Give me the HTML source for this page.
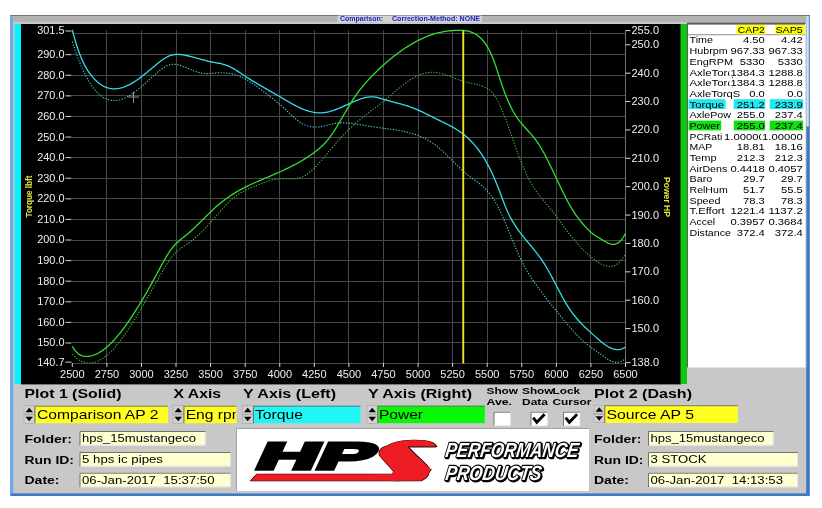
<!DOCTYPE html>
<html><head><meta charset="utf-8"><title>Comparison</title>
<style>
html,body{margin:0;padding:0;background:#fff;}
body{width:822px;height:508px;overflow:hidden;font-family:"Liberation Sans", Arial, sans-serif;}
svg{display:block;will-change:transform;}
text{white-space:pre;}
</style></head><body>
<svg width="822" height="508" viewBox="0 0 822 508" font-family='"Liberation Sans", Arial, sans-serif'>
<rect x="0" y="0" width="822" height="508" fill="#fff"/>
<rect x="10.3" y="15" width="799.5" height="481" fill="#4079c2"/>
<rect x="10.3" y="15" width="3" height="478.5" fill="#6cacec"/>
<rect x="13.2" y="15" width="793" height="478.4" fill="#c8c8c8"/>
<rect x="806.2" y="15" width="2.6" height="111.4" fill="#d4e0f2"/>
<rect x="13.2" y="15" width="793" height="9" fill="#b2b2b2"/>
<rect x="10.3" y="15" width="799.5" height="0.9" fill="#6e6e6e"/>
<rect x="13.2" y="22.3" width="674" height="1.4" fill="#d2d2d2"/>
<rect x="337.5" y="15.6" width="144.5" height="6.4" fill="#d4d4d4"/>
<text x="340" y="20.8" font-size="7" font-weight="bold" fill="#2020c8" text-anchor="start" textLength="43" lengthAdjust="spacingAndGlyphs" >Comparison:</text>
<text x="392" y="20.8" font-size="7" font-weight="bold" fill="#2020c8" text-anchor="start" textLength="88" lengthAdjust="spacingAndGlyphs" >Correction-Method: NONE</text>
<rect x="14.7" y="23.8" width="6.3" height="360.2" fill="#00f4fc"/>
<rect x="21" y="24" width="660" height="360.4" fill="#000"/>
<rect x="680.5" y="24" width="6.5" height="360" fill="#10c810"/>
<path d="M106.5 30.5V363.5 M141.5 30.5V363.5 M176.5 30.5V363.5 M210.5 30.5V363.5 M245.5 30.5V363.5 M279.5 30.5V363.5 M314.5 30.5V363.5 M348.5 30.5V363.5 M383.5 30.5V363.5 M418.5 30.5V363.5 M452.5 30.5V363.5 M487.5 30.5V363.5 M521.5 30.5V363.5 M556.5 30.5V363.5 M590.5 30.5V363.5 M72 33.5H625.5 M72 54.5H625.5 M72 75.5H625.5 M72 95.5H625.5 M72 116.5H625.5 M72 137.5H625.5 M72 157.5H625.5 M72 178.5H625.5 M72 198.5H625.5 M72 219.5H625.5 M72 240.5H625.5 M72 260.5H625.5 M72 281.5H625.5 M72 301.5H625.5 M72 322.5H625.5 M72 342.5H625.5 M72 363.5H625.5" stroke="#484848" stroke-width="1" fill="none"/>
<path d="M625.5 30.5V363.5" stroke="#707070" stroke-width="1" fill="none"/>
<path d="M65.5 31.00H71.5 M65.5 54.68H71.5 M65.5 75.27H71.5 M65.5 95.87H71.5 M65.5 116.46H71.5 M65.5 137.05H71.5 M65.5 157.65H71.5 M65.5 178.24H71.5 M65.5 198.83H71.5 M65.5 219.43H71.5 M65.5 240.02H71.5 M65.5 260.61H71.5 M65.5 281.20H71.5 M65.5 301.80H71.5 M65.5 322.39H71.5 M65.5 342.98H71.5 M65.5 362.14H71.5 M625.5 30.60H630.5 M625.5 44.79H630.5 M625.5 73.17H630.5 M625.5 101.55H630.5 M625.5 129.93H630.5 M625.5 158.31H630.5 M625.5 186.69H630.5 M625.5 215.07H630.5 M625.5 243.45H630.5 M625.5 271.83H630.5 M625.5 300.21H630.5 M625.5 328.59H630.5 M625.5 362.65H630.5 M72.30 363V367 M106.88 363V367 M141.45 363V367 M176.03 363V367 M210.60 363V367 M245.18 363V367 M279.75 363V367 M314.32 363V367 M348.90 363V367 M383.48 363V367 M418.05 363V367 M452.63 363V367 M487.20 363V367 M521.77 363V367 M556.35 363V367 M590.92 363V367 M625.50 363V367" stroke="#d8d8d8" stroke-width="1" fill="none"/>
<g font-family='"Liberation Sans", Arial, sans-serif' >
<text x="64.5" y="34.4" font-size="10" font-weight="normal" fill="#eeeeee" text-anchor="end" textLength="27.3" lengthAdjust="spacingAndGlyphs" >301.5</text>
<text x="64.5" y="58.1" font-size="10" font-weight="normal" fill="#eeeeee" text-anchor="end" textLength="27.3" lengthAdjust="spacingAndGlyphs" >290.0</text>
<text x="64.5" y="78.7" font-size="10" font-weight="normal" fill="#eeeeee" text-anchor="end" textLength="27.3" lengthAdjust="spacingAndGlyphs" >280.0</text>
<text x="64.5" y="99.3" font-size="10" font-weight="normal" fill="#eeeeee" text-anchor="end" textLength="27.3" lengthAdjust="spacingAndGlyphs" >270.0</text>
<text x="64.5" y="119.9" font-size="10" font-weight="normal" fill="#eeeeee" text-anchor="end" textLength="27.3" lengthAdjust="spacingAndGlyphs" >260.0</text>
<text x="64.5" y="140.5" font-size="10" font-weight="normal" fill="#eeeeee" text-anchor="end" textLength="27.3" lengthAdjust="spacingAndGlyphs" >250.0</text>
<text x="64.5" y="161.0" font-size="10" font-weight="normal" fill="#eeeeee" text-anchor="end" textLength="27.3" lengthAdjust="spacingAndGlyphs" >240.0</text>
<text x="64.5" y="181.6" font-size="10" font-weight="normal" fill="#eeeeee" text-anchor="end" textLength="27.3" lengthAdjust="spacingAndGlyphs" >230.0</text>
<text x="64.5" y="202.2" font-size="10" font-weight="normal" fill="#eeeeee" text-anchor="end" textLength="27.3" lengthAdjust="spacingAndGlyphs" >220.0</text>
<text x="64.5" y="222.8" font-size="10" font-weight="normal" fill="#eeeeee" text-anchor="end" textLength="27.3" lengthAdjust="spacingAndGlyphs" >210.0</text>
<text x="64.5" y="243.4" font-size="10" font-weight="normal" fill="#eeeeee" text-anchor="end" textLength="27.3" lengthAdjust="spacingAndGlyphs" >200.0</text>
<text x="64.5" y="264.0" font-size="10" font-weight="normal" fill="#eeeeee" text-anchor="end" textLength="27.3" lengthAdjust="spacingAndGlyphs" >190.0</text>
<text x="64.5" y="284.6" font-size="10" font-weight="normal" fill="#eeeeee" text-anchor="end" textLength="27.3" lengthAdjust="spacingAndGlyphs" >180.0</text>
<text x="64.5" y="305.2" font-size="10" font-weight="normal" fill="#eeeeee" text-anchor="end" textLength="27.3" lengthAdjust="spacingAndGlyphs" >170.0</text>
<text x="64.5" y="325.8" font-size="10" font-weight="normal" fill="#eeeeee" text-anchor="end" textLength="27.3" lengthAdjust="spacingAndGlyphs" >160.0</text>
<text x="64.5" y="346.4" font-size="10" font-weight="normal" fill="#eeeeee" text-anchor="end" textLength="27.3" lengthAdjust="spacingAndGlyphs" >150.0</text>
<text x="64.5" y="365.5" font-size="10" font-weight="normal" fill="#eeeeee" text-anchor="end" textLength="27.3" lengthAdjust="spacingAndGlyphs" >140.7</text>
<text x="631.5" y="34.0" font-size="10" font-weight="normal" fill="#eeeeee" text-anchor="start" textLength="27.5" lengthAdjust="spacingAndGlyphs" >255.0</text>
<text x="631.5" y="48.2" font-size="10" font-weight="normal" fill="#eeeeee" text-anchor="start" textLength="27.5" lengthAdjust="spacingAndGlyphs" >250.0</text>
<text x="631.5" y="76.6" font-size="10" font-weight="normal" fill="#eeeeee" text-anchor="start" textLength="27.5" lengthAdjust="spacingAndGlyphs" >240.0</text>
<text x="631.5" y="105.0" font-size="10" font-weight="normal" fill="#eeeeee" text-anchor="start" textLength="27.5" lengthAdjust="spacingAndGlyphs" >230.0</text>
<text x="631.5" y="133.3" font-size="10" font-weight="normal" fill="#eeeeee" text-anchor="start" textLength="27.5" lengthAdjust="spacingAndGlyphs" >220.0</text>
<text x="631.5" y="161.7" font-size="10" font-weight="normal" fill="#eeeeee" text-anchor="start" textLength="27.5" lengthAdjust="spacingAndGlyphs" >210.0</text>
<text x="631.5" y="190.1" font-size="10" font-weight="normal" fill="#eeeeee" text-anchor="start" textLength="27.5" lengthAdjust="spacingAndGlyphs" >200.0</text>
<text x="631.5" y="218.5" font-size="10" font-weight="normal" fill="#eeeeee" text-anchor="start" textLength="27.5" lengthAdjust="spacingAndGlyphs" >190.0</text>
<text x="631.5" y="246.8" font-size="10" font-weight="normal" fill="#eeeeee" text-anchor="start" textLength="27.5" lengthAdjust="spacingAndGlyphs" >180.0</text>
<text x="631.5" y="275.2" font-size="10" font-weight="normal" fill="#eeeeee" text-anchor="start" textLength="27.5" lengthAdjust="spacingAndGlyphs" >170.0</text>
<text x="631.5" y="303.6" font-size="10" font-weight="normal" fill="#eeeeee" text-anchor="start" textLength="27.5" lengthAdjust="spacingAndGlyphs" >160.0</text>
<text x="631.5" y="332.0" font-size="10" font-weight="normal" fill="#eeeeee" text-anchor="start" textLength="27.5" lengthAdjust="spacingAndGlyphs" >150.0</text>
<text x="631.5" y="366.0" font-size="10" font-weight="normal" fill="#eeeeee" text-anchor="start" textLength="27.5" lengthAdjust="spacingAndGlyphs" >138.0</text>
<text x="72.3" y="377.8" font-size="10" font-weight="normal" fill="#eeeeee" text-anchor="middle" textLength="24.5" lengthAdjust="spacingAndGlyphs" >2500</text>
<text x="106.9" y="377.8" font-size="10" font-weight="normal" fill="#eeeeee" text-anchor="middle" textLength="24.5" lengthAdjust="spacingAndGlyphs" >2750</text>
<text x="141.4" y="377.8" font-size="10" font-weight="normal" fill="#eeeeee" text-anchor="middle" textLength="24.5" lengthAdjust="spacingAndGlyphs" >3000</text>
<text x="176.0" y="377.8" font-size="10" font-weight="normal" fill="#eeeeee" text-anchor="middle" textLength="24.5" lengthAdjust="spacingAndGlyphs" >3250</text>
<text x="210.6" y="377.8" font-size="10" font-weight="normal" fill="#eeeeee" text-anchor="middle" textLength="24.5" lengthAdjust="spacingAndGlyphs" >3500</text>
<text x="245.2" y="377.8" font-size="10" font-weight="normal" fill="#eeeeee" text-anchor="middle" textLength="24.5" lengthAdjust="spacingAndGlyphs" >3750</text>
<text x="279.8" y="377.8" font-size="10" font-weight="normal" fill="#eeeeee" text-anchor="middle" textLength="24.5" lengthAdjust="spacingAndGlyphs" >4000</text>
<text x="314.3" y="377.8" font-size="10" font-weight="normal" fill="#eeeeee" text-anchor="middle" textLength="24.5" lengthAdjust="spacingAndGlyphs" >4250</text>
<text x="348.9" y="377.8" font-size="10" font-weight="normal" fill="#eeeeee" text-anchor="middle" textLength="24.5" lengthAdjust="spacingAndGlyphs" >4500</text>
<text x="383.5" y="377.8" font-size="10" font-weight="normal" fill="#eeeeee" text-anchor="middle" textLength="24.5" lengthAdjust="spacingAndGlyphs" >4750</text>
<text x="418.1" y="377.8" font-size="10" font-weight="normal" fill="#eeeeee" text-anchor="middle" textLength="24.5" lengthAdjust="spacingAndGlyphs" >5000</text>
<text x="452.6" y="377.8" font-size="10" font-weight="normal" fill="#eeeeee" text-anchor="middle" textLength="24.5" lengthAdjust="spacingAndGlyphs" >5250</text>
<text x="487.2" y="377.8" font-size="10" font-weight="normal" fill="#eeeeee" text-anchor="middle" textLength="24.5" lengthAdjust="spacingAndGlyphs" >5500</text>
<text x="521.8" y="377.8" font-size="10" font-weight="normal" fill="#eeeeee" text-anchor="middle" textLength="24.5" lengthAdjust="spacingAndGlyphs" >5750</text>
<text x="556.4" y="377.8" font-size="10" font-weight="normal" fill="#eeeeee" text-anchor="middle" textLength="24.5" lengthAdjust="spacingAndGlyphs" >6000</text>
<text x="590.9" y="377.8" font-size="10" font-weight="normal" fill="#eeeeee" text-anchor="middle" textLength="24.5" lengthAdjust="spacingAndGlyphs" >6250</text>
<text x="625.5" y="377.8" font-size="10" font-weight="normal" fill="#eeeeee" text-anchor="middle" textLength="24.5" lengthAdjust="spacingAndGlyphs" >6500</text>
<text transform="translate(32.3,196.5) rotate(-90)" font-size="8.6" font-weight="bold" fill="#e8e840" text-anchor="middle" textLength="42" lengthAdjust="spacingAndGlyphs">Torque lbft</text>
<text transform="translate(664,197) rotate(90)" font-size="8.5" font-weight="bold" fill="#e8e840" text-anchor="middle" textLength="40" lengthAdjust="spacingAndGlyphs">Power HP</text>
</g>
<path d="M72.30 41.69 L73.41 45.17 L74.52 48.53 L75.63 51.76 L76.73 54.87 L77.84 57.85 L78.95 60.72 L80.06 63.47 L81.17 66.11 L82.28 68.63 L83.39 71.05 L84.49 73.35 L85.60 75.54 L86.71 77.63 L87.82 79.62 L88.93 81.50 L90.04 83.28 L91.15 84.96 L92.26 86.54 L93.36 88.03 L94.47 89.42 L95.58 90.73 L96.69 91.94 L97.80 93.06 L98.91 94.10 L100.02 95.05 L101.12 95.92 L102.23 96.71 L103.34 97.42 L104.45 98.05 L105.56 98.61 L106.67 99.09 L107.78 99.50 L108.88 99.84 L109.99 100.11 L111.10 100.31 L112.21 100.45 L113.32 100.52 L114.43 100.54 L115.54 100.49 L116.64 100.39 L117.75 100.23 L118.86 100.01 L119.97 99.74 L121.08 99.42 L122.19 99.06 L123.30 98.64 L124.41 98.18 L125.51 97.68 L126.62 97.13 L127.73 96.55 L128.84 95.92 L129.95 95.26 L131.06 94.56 L132.17 93.84 L133.27 93.08 L134.38 92.29 L135.49 91.47 L136.60 90.63 L137.71 89.76 L138.82 88.87 L139.93 87.96 L141.03 87.03 L142.14 86.09 L143.25 85.13 L144.36 84.16 L145.47 83.17 L146.58 82.18 L147.69 81.17 L148.79 80.16 L149.90 79.15 L151.01 78.13 L152.12 77.12 L153.23 76.10 L154.34 75.09 L155.45 74.10 L156.55 73.12 L157.66 72.16 L158.77 71.23 L159.88 70.34 L160.99 69.48 L162.10 68.67 L163.21 67.92 L164.32 67.22 L165.42 66.58 L166.53 66.00 L167.64 65.50 L168.75 65.08 L169.86 64.75 L170.97 64.50 L172.08 64.35 L173.18 64.27 L174.29 64.28 L175.40 64.36 L176.51 64.50 L177.62 64.71 L178.73 64.96 L179.84 65.27 L180.94 65.61 L182.05 66.00 L183.16 66.40 L184.27 66.84 L185.38 67.28 L186.49 67.74 L187.60 68.21 L188.70 68.67 L189.81 69.13 L190.92 69.59 L192.03 70.04 L193.14 70.47 L194.25 70.90 L195.36 71.30 L196.47 71.68 L197.57 72.04 L198.68 72.37 L199.79 72.67 L200.90 72.93 L202.01 73.16 L203.12 73.34 L204.23 73.48 L205.33 73.58 L206.44 73.63 L207.55 73.64 L208.66 73.62 L209.77 73.56 L210.88 73.49 L211.99 73.40 L213.09 73.29 L214.20 73.18 L215.31 73.07 L216.42 72.97 L217.53 72.87 L218.64 72.80 L219.75 72.74 L220.85 72.71 L221.96 72.71 L223.07 72.73 L224.18 72.78 L225.29 72.86 L226.40 72.96 L227.51 73.09 L228.62 73.25 L229.72 73.44 L230.83 73.65 L231.94 73.90 L233.05 74.17 L234.16 74.47 L235.27 74.80 L236.38 75.16 L237.48 75.55 L238.59 75.97 L239.70 76.42 L240.81 76.90 L241.92 77.41 L243.03 77.95 L244.14 78.51 L245.24 79.10 L246.35 79.72 L247.46 80.36 L248.57 81.02 L249.68 81.70 L250.79 82.41 L251.90 83.13 L253.00 83.87 L254.11 84.63 L255.22 85.40 L256.33 86.18 L257.44 86.98 L258.55 87.79 L259.66 88.62 L260.76 89.45 L261.87 90.28 L262.98 91.13 L264.09 91.98 L265.20 92.84 L266.31 93.70 L267.42 94.56 L268.53 95.42 L269.63 96.29 L270.74 97.16 L271.85 98.03 L272.96 98.91 L274.07 99.80 L275.18 100.69 L276.29 101.59 L277.39 102.50 L278.50 103.42 L279.61 104.36 L280.72 105.30 L281.83 106.25 L282.94 107.22 L284.05 108.21 L285.15 109.20 L286.26 110.22 L287.37 111.25 L288.48 112.30 L289.59 113.35 L290.70 114.40 L291.81 115.45 L292.91 116.48 L294.02 117.48 L295.13 118.45 L296.24 119.38 L297.35 120.27 L298.46 121.10 L299.57 121.89 L300.68 122.61 L301.78 123.27 L302.89 123.88 L304.00 124.43 L305.11 124.92 L306.22 125.36 L307.33 125.74 L308.44 126.08 L309.54 126.36 L310.65 126.59 L311.76 126.78 L312.87 126.91 L313.98 127.01 L315.09 127.06 L316.20 127.06 L317.30 127.02 L318.41 126.95 L319.52 126.83 L320.63 126.68 L321.74 126.50 L322.85 126.29 L323.96 126.06 L325.06 125.82 L326.17 125.56 L327.28 125.29 L328.39 125.01 L329.50 124.74 L330.61 124.47 L331.72 124.21 L332.83 123.96 L333.93 123.73 L335.04 123.52 L336.15 123.33 L337.26 123.17 L338.37 123.05 L339.48 122.95 L340.59 122.88 L341.69 122.84 L342.80 122.82 L343.91 122.83 L345.02 122.86 L346.13 122.91 L347.24 122.97 L348.35 123.06 L349.45 123.16 L350.56 123.28 L351.67 123.41 L352.78 123.55 L353.89 123.70 L355.00 123.86 L356.11 124.03 L357.21 124.21 L358.32 124.38 L359.43 124.57 L360.54 124.75 L361.65 124.94 L362.76 125.12 L363.87 125.30 L364.97 125.49 L366.08 125.67 L367.19 125.85 L368.30 126.03 L369.41 126.21 L370.52 126.38 L371.63 126.56 L372.74 126.73 L373.84 126.90 L374.95 127.07 L376.06 127.24 L377.17 127.40 L378.28 127.56 L379.39 127.72 L380.50 127.87 L381.60 128.02 L382.71 128.17 L383.82 128.32 L384.93 128.46 L386.04 128.61 L387.15 128.75 L388.26 128.90 L389.36 129.04 L390.47 129.19 L391.58 129.34 L392.69 129.50 L393.80 129.66 L394.91 129.82 L396.02 129.99 L397.12 130.17 L398.23 130.35 L399.34 130.54 L400.45 130.74 L401.56 130.94 L402.67 131.16 L403.78 131.39 L404.89 131.62 L405.99 131.87 L407.10 132.13 L408.21 132.41 L409.32 132.70 L410.43 133.00 L411.54 133.32 L412.65 133.65 L413.75 134.00 L414.86 134.37 L415.97 134.75 L417.08 135.15 L418.19 135.58 L419.30 136.02 L420.41 136.48 L421.51 136.97 L422.62 137.47 L423.73 138.00 L424.84 138.55 L425.95 139.13 L427.06 139.73 L428.17 140.35 L429.27 141.00 L430.38 141.68 L431.49 142.39 L432.60 143.12 L433.71 143.88 L434.82 144.67 L435.93 145.49 L437.04 146.34 L438.14 147.23 L439.25 148.14 L440.36 149.09 L441.47 150.07 L442.58 151.08 L443.69 152.10 L444.80 153.15 L445.90 154.22 L447.01 155.30 L448.12 156.40 L449.23 157.50 L450.34 158.61 L451.45 159.72 L452.56 160.83 L453.66 161.93 L454.77 163.03 L455.88 164.12 L456.99 165.19 L458.10 166.26 L459.21 167.31 L460.32 168.35 L461.42 169.37 L462.53 170.38 L463.64 171.37 L464.75 172.34 L465.86 173.30 L466.97 174.23 L468.08 175.14 L469.18 176.03 L470.29 176.90 L471.40 177.75 L472.51 178.57 L473.62 179.38 L474.73 180.19 L475.84 181.00 L476.95 181.81 L478.05 182.64 L479.16 183.49 L480.27 184.36 L481.38 185.26 L482.49 186.20 L483.60 187.18 L484.71 188.22 L485.81 189.31 L486.92 190.46 L488.03 191.69 L489.14 192.98 L490.25 194.36 L491.36 195.83 L492.47 197.40 L493.57 199.06 L494.68 200.83 L495.79 202.71 L496.90 204.70 L498.01 206.79 L499.12 208.97 L500.23 211.24 L501.33 213.58 L502.44 216.00 L503.55 218.48 L504.66 221.03 L505.77 223.62 L506.88 226.25 L507.99 228.93 L509.10 231.63 L510.20 234.36 L511.31 237.10 L512.42 239.84 L513.53 242.58 L514.64 245.29 L515.75 247.96 L516.86 250.59 L517.96 253.16 L519.07 255.66 L520.18 258.07 L521.29 260.39 L522.40 262.61 L523.51 264.75 L524.62 266.80 L525.72 268.78 L526.83 270.69 L527.94 272.53 L529.05 274.32 L530.16 276.06 L531.27 277.77 L532.38 279.43 L533.48 281.07 L534.59 282.68 L535.70 284.27 L536.81 285.84 L537.92 287.39 L539.03 288.92 L540.14 290.43 L541.25 291.92 L542.35 293.39 L543.46 294.85 L544.57 296.30 L545.68 297.73 L546.79 299.14 L547.90 300.55 L549.01 301.94 L550.11 303.33 L551.22 304.70 L552.33 306.06 L553.44 307.42 L554.55 308.77 L555.66 310.12 L556.77 311.46 L557.87 312.80 L558.98 314.13 L560.09 315.46 L561.20 316.79 L562.31 318.13 L563.42 319.46 L564.53 320.79 L565.63 322.12 L566.74 323.45 L567.85 324.76 L568.96 326.07 L570.07 327.37 L571.18 328.66 L572.29 329.93 L573.39 331.18 L574.50 332.41 L575.61 333.62 L576.72 334.80 L577.83 335.96 L578.94 337.09 L580.05 338.19 L581.16 339.26 L582.26 340.29 L583.37 341.28 L584.48 342.24 L585.59 343.16 L586.70 344.05 L587.81 344.92 L588.92 345.76 L590.02 346.59 L591.13 347.40 L592.24 348.20 L593.35 348.99 L594.46 349.77 L595.57 350.56 L596.68 351.34 L597.78 352.14 L598.89 352.94 L600.00 353.76 L601.11 354.58 L602.22 355.41 L603.33 356.22 L604.44 357.02 L605.54 357.80 L606.65 358.54 L607.76 359.25 L608.87 359.90 L609.98 360.50 L611.09 361.03 L612.20 361.49 L613.31 361.87 L614.41 362.16 L615.52 362.36 L616.63 362.44 L617.74 362.42 L618.85 362.27 L619.96 362.00 L621.07 361.59 L622.17 361.03 L623.28 360.32 L624.39 359.45 L625.50 358.41" stroke="#54ccbc" stroke-width="1.1" stroke-dasharray="1.3 1.5" fill="none"/>
<path d="M72.30 354.30 L73.41 355.44 L74.52 356.50 L75.63 357.48 L76.73 358.37 L77.84 359.18 L78.95 359.91 L80.06 360.56 L81.17 361.13 L82.28 361.62 L83.39 362.04 L84.49 362.39 L85.60 362.66 L86.71 362.86 L87.82 362.98 L88.93 363.04 L90.04 363.03 L91.15 362.95 L92.26 362.80 L93.36 362.59 L94.47 362.32 L95.58 361.98 L96.69 361.58 L97.80 361.12 L98.91 360.60 L100.02 360.02 L101.12 359.39 L102.23 358.70 L103.34 357.96 L104.45 357.16 L105.56 356.31 L106.67 355.41 L107.78 354.46 L108.88 353.46 L109.99 352.42 L111.10 351.33 L112.21 350.19 L113.32 349.01 L114.43 347.79 L115.54 346.52 L116.64 345.22 L117.75 343.88 L118.86 342.50 L119.97 341.08 L121.08 339.63 L122.19 338.14 L123.30 336.62 L124.41 335.07 L125.51 333.49 L126.62 331.88 L127.73 330.24 L128.84 328.57 L129.95 326.88 L131.06 325.17 L132.17 323.43 L133.27 321.67 L134.38 319.88 L135.49 318.08 L136.60 316.26 L137.71 314.42 L138.82 312.57 L139.93 310.70 L141.03 308.81 L142.14 306.92 L143.25 305.01 L144.36 303.09 L145.47 301.16 L146.58 299.23 L147.69 297.29 L148.79 295.34 L149.90 293.39 L151.01 291.43 L152.12 289.48 L153.23 287.52 L154.34 285.57 L155.45 283.61 L156.55 281.66 L157.66 279.71 L158.77 277.77 L159.88 275.83 L160.99 273.91 L162.10 271.99 L163.21 270.10 L164.32 268.24 L165.42 266.42 L166.53 264.64 L167.64 262.92 L168.75 261.26 L169.86 259.67 L170.97 258.16 L172.08 256.74 L173.18 255.41 L174.29 254.18 L175.40 253.04 L176.51 251.98 L177.62 250.99 L178.73 250.06 L179.84 249.19 L180.94 248.36 L182.05 247.56 L183.16 246.79 L184.27 246.04 L185.38 245.30 L186.49 244.55 L187.60 243.79 L188.70 243.01 L189.81 242.20 L190.92 241.36 L192.03 240.49 L193.14 239.60 L194.25 238.67 L195.36 237.72 L196.47 236.75 L197.57 235.75 L198.68 234.72 L199.79 233.68 L200.90 232.61 L202.01 231.52 L203.12 230.41 L204.23 229.28 L205.33 228.14 L206.44 226.97 L207.55 225.80 L208.66 224.60 L209.77 223.39 L210.88 222.17 L211.99 220.93 L213.09 219.69 L214.20 218.43 L215.31 217.16 L216.42 215.89 L217.53 214.60 L218.64 213.31 L219.75 212.02 L220.85 210.73 L221.96 209.45 L223.07 208.18 L224.18 206.93 L225.29 205.71 L226.40 204.51 L227.51 203.35 L228.62 202.23 L229.72 201.15 L230.83 200.12 L231.94 199.14 L233.05 198.21 L234.16 197.32 L235.27 196.47 L236.38 195.67 L237.48 194.90 L238.59 194.17 L239.70 193.47 L240.81 192.80 L241.92 192.16 L243.03 191.55 L244.14 190.96 L245.24 190.40 L246.35 189.85 L247.46 189.32 L248.57 188.81 L249.68 188.32 L250.79 187.83 L251.90 187.35 L253.00 186.88 L254.11 186.42 L255.22 185.95 L256.33 185.49 L257.44 185.04 L258.55 184.58 L259.66 184.14 L260.76 183.70 L261.87 183.28 L262.98 182.86 L264.09 182.46 L265.20 182.07 L266.31 181.69 L267.42 181.33 L268.53 180.99 L269.63 180.67 L270.74 180.37 L271.85 180.08 L272.96 179.82 L274.07 179.59 L275.18 179.38 L276.29 179.20 L277.39 179.04 L278.50 178.92 L279.61 178.83 L280.72 178.76 L281.83 178.73 L282.94 178.71 L284.05 178.71 L285.15 178.73 L286.26 178.75 L287.37 178.77 L288.48 178.79 L289.59 178.81 L290.70 178.81 L291.81 178.79 L292.91 178.75 L294.02 178.68 L295.13 178.59 L296.24 178.45 L297.35 178.27 L298.46 178.05 L299.57 177.77 L300.68 177.44 L301.78 177.05 L302.89 176.59 L304.00 176.06 L305.11 175.45 L306.22 174.78 L307.33 174.05 L308.44 173.25 L309.54 172.40 L310.65 171.49 L311.76 170.53 L312.87 169.53 L313.98 168.47 L315.09 167.38 L316.20 166.25 L317.30 165.08 L318.41 163.88 L319.52 162.65 L320.63 161.40 L321.74 160.12 L322.85 158.83 L323.96 157.52 L325.06 156.20 L326.17 154.87 L327.28 153.53 L328.39 152.19 L329.50 150.85 L330.61 149.52 L331.72 148.19 L332.83 146.88 L333.93 145.57 L335.04 144.29 L336.15 143.02 L337.26 141.76 L338.37 140.52 L339.48 139.30 L340.59 138.09 L341.69 136.90 L342.80 135.73 L343.91 134.57 L345.02 133.42 L346.13 132.30 L347.24 131.18 L348.35 130.09 L349.45 129.01 L350.56 127.94 L351.67 126.89 L352.78 125.86 L353.89 124.84 L355.00 123.84 L356.11 122.85 L357.21 121.88 L358.32 120.93 L359.43 119.99 L360.54 119.06 L361.65 118.15 L362.76 117.26 L363.87 116.37 L364.97 115.50 L366.08 114.64 L367.19 113.79 L368.30 112.95 L369.41 112.11 L370.52 111.28 L371.63 110.45 L372.74 109.62 L373.84 108.79 L374.95 107.96 L376.06 107.12 L377.17 106.28 L378.28 105.44 L379.39 104.59 L380.50 103.73 L381.60 102.86 L382.71 101.98 L383.82 101.08 L384.93 100.17 L386.04 99.25 L387.15 98.32 L388.26 97.38 L389.36 96.44 L390.47 95.49 L391.58 94.54 L392.69 93.58 L393.80 92.63 L394.91 91.68 L396.02 90.73 L397.12 89.79 L398.23 88.86 L399.34 87.94 L400.45 87.03 L401.56 86.14 L402.67 85.26 L403.78 84.39 L404.89 83.55 L405.99 82.73 L407.10 81.93 L408.21 81.16 L409.32 80.41 L410.43 79.69 L411.54 79.00 L412.65 78.34 L413.75 77.71 L414.86 77.12 L415.97 76.55 L417.08 76.02 L418.19 75.52 L419.30 75.05 L420.41 74.62 L421.51 74.22 L422.62 73.85 L423.73 73.53 L424.84 73.23 L425.95 72.98 L427.06 72.76 L428.17 72.59 L429.27 72.45 L430.38 72.34 L431.49 72.28 L432.60 72.26 L433.71 72.28 L434.82 72.35 L435.93 72.45 L437.04 72.60 L438.14 72.78 L439.25 73.00 L440.36 73.25 L441.47 73.53 L442.58 73.84 L443.69 74.17 L444.80 74.52 L445.90 74.90 L447.01 75.29 L448.12 75.70 L449.23 76.11 L450.34 76.54 L451.45 76.97 L452.56 77.41 L453.66 77.85 L454.77 78.29 L455.88 78.72 L456.99 79.15 L458.10 79.57 L459.21 79.97 L460.32 80.36 L461.42 80.74 L462.53 81.09 L463.64 81.43 L464.75 81.74 L465.86 82.03 L466.97 82.30 L468.08 82.57 L469.18 82.82 L470.29 83.06 L471.40 83.31 L472.51 83.55 L473.62 83.79 L474.73 84.05 L475.84 84.31 L476.95 84.59 L478.05 84.88 L479.16 85.19 L480.27 85.53 L481.38 85.89 L482.49 86.28 L483.60 86.71 L484.71 87.19 L485.81 87.73 L486.92 88.34 L488.03 89.05 L489.14 89.85 L490.25 90.77 L491.36 91.82 L492.47 93.02 L493.57 94.36 L494.68 95.88 L495.79 97.57 L496.90 99.44 L498.01 101.48 L499.12 103.68 L500.23 106.02 L501.33 108.49 L502.44 111.08 L503.55 113.79 L504.66 116.59 L505.77 119.49 L506.88 122.47 L507.99 125.51 L509.10 128.61 L510.20 131.75 L511.31 134.92 L512.42 138.12 L513.53 141.31 L514.64 144.50 L515.75 147.65 L516.86 150.77 L517.96 153.83 L519.07 156.82 L520.18 159.72 L521.29 162.53 L522.40 165.23 L523.51 167.82 L524.62 170.32 L525.72 172.73 L526.83 175.03 L527.94 177.25 L529.05 179.37 L530.16 181.41 L531.27 183.36 L532.38 185.23 L533.48 187.02 L534.59 188.74 L535.70 190.38 L536.81 191.95 L537.92 193.47 L539.03 194.94 L540.14 196.36 L541.25 197.74 L542.35 199.10 L543.46 200.43 L544.57 201.74 L545.68 203.05 L546.79 204.35 L547.90 205.66 L549.01 206.98 L550.11 208.32 L551.22 209.68 L552.33 211.08 L553.44 212.51 L554.55 213.97 L555.66 215.45 L556.77 216.95 L557.87 218.47 L558.98 219.99 L560.09 221.52 L561.20 223.04 L562.31 224.55 L563.42 226.05 L564.53 227.54 L565.63 229.01 L566.74 230.47 L567.85 231.91 L568.96 233.34 L570.07 234.74 L571.18 236.13 L572.29 237.50 L573.39 238.85 L574.50 240.18 L575.61 241.49 L576.72 242.77 L577.83 244.04 L578.94 245.28 L580.05 246.49 L581.16 247.68 L582.26 248.84 L583.37 249.98 L584.48 251.09 L585.59 252.17 L586.70 253.22 L587.81 254.25 L588.92 255.24 L590.02 256.20 L591.13 257.13 L592.24 258.02 L593.35 258.89 L594.46 259.71 L595.57 260.51 L596.68 261.26 L597.78 261.98 L598.89 262.66 L600.00 263.31 L601.11 263.91 L602.22 264.47 L603.33 264.98 L604.44 265.42 L605.54 265.80 L606.65 266.10 L607.76 266.33 L608.87 266.47 L609.98 266.51 L611.09 266.46 L612.20 266.30 L613.31 266.02 L614.41 265.63 L615.52 265.11 L616.63 264.45 L617.74 263.65 L618.85 262.71 L619.96 261.61 L621.07 260.36 L622.17 258.93 L623.28 257.33 L624.39 255.55 L625.50 253.58" stroke="#44b444" stroke-width="1.1" stroke-dasharray="1.3 1.5" fill="none"/>
<path d="M72.30 29.80 L73.41 34.11 L74.52 38.17 L75.63 41.98 L76.73 45.56 L77.84 48.91 L78.95 52.04 L80.06 54.97 L81.17 57.71 L82.28 60.26 L83.39 62.64 L84.49 64.85 L85.60 66.91 L86.71 68.83 L87.82 70.62 L88.93 72.28 L90.04 73.83 L91.15 75.28 L92.26 76.63 L93.36 77.91 L94.47 79.10 L95.58 80.22 L96.69 81.26 L97.80 82.23 L98.91 83.13 L100.02 83.95 L101.12 84.71 L102.23 85.40 L103.34 86.02 L104.45 86.57 L105.56 87.06 L106.67 87.48 L107.78 87.85 L108.88 88.15 L109.99 88.40 L111.10 88.58 L112.21 88.72 L113.32 88.79 L114.43 88.82 L115.54 88.79 L116.64 88.71 L117.75 88.58 L118.86 88.40 L119.97 88.18 L121.08 87.91 L122.19 87.60 L123.30 87.25 L124.41 86.85 L125.51 86.42 L126.62 85.95 L127.73 85.44 L128.84 84.90 L129.95 84.33 L131.06 83.72 L132.17 83.08 L133.27 82.42 L134.38 81.73 L135.49 81.01 L136.60 80.26 L137.71 79.50 L138.82 78.71 L139.93 77.90 L141.03 77.07 L142.14 76.22 L143.25 75.36 L144.36 74.49 L145.47 73.60 L146.58 72.70 L147.69 71.79 L148.79 70.87 L149.90 69.94 L151.01 69.01 L152.12 68.07 L153.23 67.13 L154.34 66.20 L155.45 65.26 L156.55 64.34 L157.66 63.43 L158.77 62.55 L159.88 61.68 L160.99 60.85 L162.10 60.05 L163.21 59.28 L164.32 58.56 L165.42 57.88 L166.53 57.26 L167.64 56.69 L168.75 56.18 L169.86 55.73 L170.97 55.35 L172.08 55.04 L173.18 54.80 L174.29 54.62 L175.40 54.50 L176.51 54.43 L177.62 54.41 L178.73 54.43 L179.84 54.50 L180.94 54.60 L182.05 54.73 L183.16 54.89 L184.27 55.08 L185.38 55.29 L186.49 55.51 L187.60 55.75 L188.70 56.00 L189.81 56.27 L190.92 56.54 L192.03 56.83 L193.14 57.12 L194.25 57.42 L195.36 57.73 L196.47 58.04 L197.57 58.35 L198.68 58.66 L199.79 58.98 L200.90 59.29 L202.01 59.59 L203.12 59.90 L204.23 60.20 L205.33 60.49 L206.44 60.77 L207.55 61.04 L208.66 61.30 L209.77 61.55 L210.88 61.79 L211.99 62.01 L213.09 62.22 L214.20 62.42 L215.31 62.62 L216.42 62.82 L217.53 63.03 L218.64 63.25 L219.75 63.47 L220.85 63.72 L221.96 63.98 L223.07 64.27 L224.18 64.58 L225.29 64.93 L226.40 65.31 L227.51 65.73 L228.62 66.19 L229.72 66.70 L230.83 67.24 L231.94 67.82 L233.05 68.43 L234.16 69.06 L235.27 69.73 L236.38 70.41 L237.48 71.11 L238.59 71.83 L239.70 72.56 L240.81 73.29 L241.92 74.03 L243.03 74.77 L244.14 75.51 L245.24 76.25 L246.35 76.97 L247.46 77.69 L248.57 78.40 L249.68 79.10 L250.79 79.79 L251.90 80.48 L253.00 81.16 L254.11 81.83 L255.22 82.50 L256.33 83.16 L257.44 83.82 L258.55 84.47 L259.66 85.12 L260.76 85.76 L261.87 86.40 L262.98 87.04 L264.09 87.67 L265.20 88.31 L266.31 88.94 L267.42 89.57 L268.53 90.20 L269.63 90.83 L270.74 91.46 L271.85 92.08 L272.96 92.71 L274.07 93.35 L275.18 93.98 L276.29 94.61 L277.39 95.25 L278.50 95.89 L279.61 96.54 L280.72 97.18 L281.83 97.83 L282.94 98.49 L284.05 99.14 L285.15 99.79 L286.26 100.44 L287.37 101.08 L288.48 101.72 L289.59 102.36 L290.70 102.99 L291.81 103.61 L292.91 104.22 L294.02 104.82 L295.13 105.40 L296.24 105.98 L297.35 106.54 L298.46 107.08 L299.57 107.61 L300.68 108.12 L301.78 108.61 L302.89 109.09 L304.00 109.54 L305.11 109.96 L306.22 110.37 L307.33 110.74 L308.44 111.10 L309.54 111.42 L310.65 111.72 L311.76 111.98 L312.87 112.22 L313.98 112.42 L315.09 112.59 L316.20 112.72 L317.30 112.82 L318.41 112.88 L319.52 112.90 L320.63 112.89 L321.74 112.83 L322.85 112.74 L323.96 112.61 L325.06 112.45 L326.17 112.26 L327.28 112.04 L328.39 111.79 L329.50 111.51 L330.61 111.21 L331.72 110.88 L332.83 110.53 L333.93 110.16 L335.04 109.77 L336.15 109.36 L337.26 108.94 L338.37 108.50 L339.48 108.05 L340.59 107.58 L341.69 107.11 L342.80 106.62 L343.91 106.13 L345.02 105.64 L346.13 105.14 L347.24 104.63 L348.35 104.13 L349.45 103.62 L350.56 103.12 L351.67 102.63 L352.78 102.13 L353.89 101.65 L355.00 101.17 L356.11 100.70 L357.21 100.25 L358.32 99.81 L359.43 99.39 L360.54 98.99 L361.65 98.61 L362.76 98.27 L363.87 97.95 L364.97 97.66 L366.08 97.41 L367.19 97.20 L368.30 97.04 L369.41 96.91 L370.52 96.84 L371.63 96.81 L372.74 96.84 L373.84 96.92 L374.95 97.05 L376.06 97.24 L377.17 97.46 L378.28 97.73 L379.39 98.02 L380.50 98.33 L381.60 98.67 L382.71 99.01 L383.82 99.36 L384.93 99.70 L386.04 100.04 L387.15 100.37 L388.26 100.68 L389.36 100.99 L390.47 101.30 L391.58 101.60 L392.69 101.89 L393.80 102.18 L394.91 102.47 L396.02 102.76 L397.12 103.05 L398.23 103.34 L399.34 103.63 L400.45 103.93 L401.56 104.23 L402.67 104.54 L403.78 104.86 L404.89 105.19 L405.99 105.53 L407.10 105.88 L408.21 106.24 L409.32 106.62 L410.43 107.01 L411.54 107.42 L412.65 107.84 L413.75 108.28 L414.86 108.72 L415.97 109.19 L417.08 109.66 L418.19 110.14 L419.30 110.64 L420.41 111.14 L421.51 111.65 L422.62 112.17 L423.73 112.70 L424.84 113.23 L425.95 113.77 L427.06 114.31 L428.17 114.86 L429.27 115.41 L430.38 115.96 L431.49 116.52 L432.60 117.07 L433.71 117.63 L434.82 118.19 L435.93 118.74 L437.04 119.30 L438.14 119.85 L439.25 120.40 L440.36 120.94 L441.47 121.49 L442.58 122.03 L443.69 122.57 L444.80 123.11 L445.90 123.66 L447.01 124.21 L448.12 124.78 L449.23 125.35 L450.34 125.93 L451.45 126.52 L452.56 127.13 L453.66 127.76 L454.77 128.40 L455.88 129.06 L456.99 129.75 L458.10 130.46 L459.21 131.19 L460.32 131.95 L461.42 132.74 L462.53 133.56 L463.64 134.42 L464.75 135.30 L465.86 136.22 L466.97 137.18 L468.08 138.18 L469.18 139.22 L470.29 140.30 L471.40 141.43 L472.51 142.60 L473.62 143.83 L474.73 145.10 L475.84 146.42 L476.95 147.80 L478.05 149.24 L479.16 150.74 L480.27 152.29 L481.38 153.91 L482.49 155.60 L483.60 157.35 L484.71 159.17 L485.81 161.07 L486.92 163.03 L488.03 165.08 L489.14 167.20 L490.25 169.40 L491.36 171.68 L492.47 174.04 L493.57 176.49 L494.68 179.03 L495.79 181.66 L496.90 184.38 L498.01 187.19 L499.12 190.08 L500.23 193.01 L501.33 195.96 L502.44 198.91 L503.55 201.81 L504.66 204.66 L505.77 207.42 L506.88 210.07 L507.99 212.58 L509.10 214.92 L510.20 217.11 L511.31 219.17 L512.42 221.10 L513.53 222.94 L514.64 224.69 L515.75 226.38 L516.86 228.01 L517.96 229.59 L519.07 231.13 L520.18 232.63 L521.29 234.09 L522.40 235.52 L523.51 236.92 L524.62 238.30 L525.72 239.66 L526.83 241.00 L527.94 242.34 L529.05 243.67 L530.16 245.00 L531.27 246.33 L532.38 247.68 L533.48 249.03 L534.59 250.40 L535.70 251.79 L536.81 253.21 L537.92 254.66 L539.03 256.14 L540.14 257.66 L541.25 259.22 L542.35 260.83 L543.46 262.49 L544.57 264.21 L545.68 265.99 L546.79 267.84 L547.90 269.75 L549.01 271.71 L550.11 273.73 L551.22 275.78 L552.33 277.87 L553.44 279.99 L554.55 282.12 L555.66 284.27 L556.77 286.42 L557.87 288.57 L558.98 290.70 L560.09 292.81 L561.20 294.90 L562.31 296.95 L563.42 298.97 L564.53 300.93 L565.63 302.83 L566.74 304.67 L567.85 306.44 L568.96 308.14 L570.07 309.78 L571.18 311.36 L572.29 312.89 L573.39 314.35 L574.50 315.77 L575.61 317.14 L576.72 318.46 L577.83 319.74 L578.94 320.98 L580.05 322.19 L581.16 323.36 L582.26 324.50 L583.37 325.61 L584.48 326.70 L585.59 327.77 L586.70 328.82 L587.81 329.85 L588.92 330.87 L590.02 331.88 L591.13 332.88 L592.24 333.88 L593.35 334.88 L594.46 335.88 L595.57 336.88 L596.68 337.87 L597.78 338.85 L598.89 339.82 L600.00 340.76 L601.11 341.68 L602.22 342.58 L603.33 343.43 L604.44 344.26 L605.54 345.04 L606.65 345.77 L607.76 346.45 L608.87 347.08 L609.98 347.65 L611.09 348.16 L612.20 348.59 L613.31 348.96 L614.41 349.25 L615.52 349.46 L616.63 349.58 L617.74 349.61 L618.85 349.55 L619.96 349.39 L621.07 349.13 L622.17 348.76 L623.28 348.28 L624.39 347.68 L625.50 346.97" stroke="#30e0e8" stroke-width="1.3" stroke-linejoin="round" fill="none"/>
<path d="M72.30 346.41 L73.41 348.20 L74.52 349.77 L75.63 351.15 L76.73 352.33 L77.84 353.34 L78.95 354.17 L80.06 354.86 L81.17 355.40 L82.28 355.82 L83.39 356.11 L84.49 356.31 L85.60 356.40 L86.71 356.42 L87.82 356.37 L88.93 356.25 L90.04 356.08 L91.15 355.85 L92.26 355.56 L93.36 355.22 L94.47 354.82 L95.58 354.38 L96.69 353.87 L97.80 353.32 L98.91 352.72 L100.02 352.07 L101.12 351.36 L102.23 350.62 L103.34 349.82 L104.45 348.98 L105.56 348.10 L106.67 347.17 L107.78 346.21 L108.88 345.20 L109.99 344.15 L111.10 343.06 L112.21 341.93 L113.32 340.77 L114.43 339.57 L115.54 338.33 L116.64 337.06 L117.75 335.76 L118.86 334.43 L119.97 333.06 L121.08 331.66 L122.19 330.23 L123.30 328.78 L124.41 327.29 L125.51 325.77 L126.62 324.23 L127.73 322.66 L128.84 321.06 L129.95 319.44 L131.06 317.79 L132.17 316.11 L133.27 314.42 L134.38 312.70 L135.49 310.96 L136.60 309.19 L137.71 307.41 L138.82 305.60 L139.93 303.78 L141.03 301.93 L142.14 300.07 L143.25 298.19 L144.36 296.29 L145.47 294.38 L146.58 292.45 L147.69 290.51 L148.79 288.55 L149.90 286.58 L151.01 284.59 L152.12 282.60 L153.23 280.59 L154.34 278.57 L155.45 276.54 L156.55 274.50 L157.66 272.46 L158.77 270.40 L159.88 268.34 L160.99 266.28 L162.10 264.22 L163.21 262.19 L164.32 260.19 L165.42 258.23 L166.53 256.33 L167.64 254.50 L168.75 252.75 L169.86 251.10 L170.97 249.54 L172.08 248.10 L173.18 246.75 L174.29 245.50 L175.40 244.32 L176.51 243.21 L177.62 242.17 L178.73 241.17 L179.84 240.21 L180.94 239.29 L182.05 238.39 L183.16 237.51 L184.27 236.62 L185.38 235.73 L186.49 234.83 L187.60 233.90 L188.70 232.95 L189.81 231.98 L190.92 230.99 L192.03 229.99 L193.14 228.96 L194.25 227.93 L195.36 226.88 L196.47 225.81 L197.57 224.74 L198.68 223.66 L199.79 222.58 L200.90 221.49 L202.01 220.39 L203.12 219.30 L204.23 218.20 L205.33 217.11 L206.44 216.02 L207.55 214.93 L208.66 213.85 L209.77 212.77 L210.88 211.71 L211.99 210.66 L213.09 209.62 L214.20 208.59 L215.31 207.58 L216.42 206.59 L217.53 205.61 L218.64 204.66 L219.75 203.73 L220.85 202.82 L221.96 201.93 L223.07 201.06 L224.18 200.21 L225.29 199.38 L226.40 198.57 L227.51 197.78 L228.62 197.00 L229.72 196.24 L230.83 195.51 L231.94 194.78 L233.05 194.08 L234.16 193.38 L235.27 192.71 L236.38 192.04 L237.48 191.40 L238.59 190.76 L239.70 190.14 L240.81 189.53 L241.92 188.93 L243.03 188.34 L244.14 187.77 L245.24 187.20 L246.35 186.65 L247.46 186.10 L248.57 185.56 L249.68 185.03 L250.79 184.51 L251.90 184.00 L253.00 183.49 L254.11 182.99 L255.22 182.49 L256.33 182.00 L257.44 181.51 L258.55 181.03 L259.66 180.55 L260.76 180.08 L261.87 179.60 L262.98 179.13 L264.09 178.66 L265.20 178.19 L266.31 177.73 L267.42 177.26 L268.53 176.79 L269.63 176.32 L270.74 175.85 L271.85 175.38 L272.96 174.91 L274.07 174.43 L275.18 173.95 L276.29 173.47 L277.39 172.98 L278.50 172.50 L279.61 172.00 L280.72 171.50 L281.83 171.00 L282.94 170.49 L284.05 169.98 L285.15 169.46 L286.26 168.94 L287.37 168.40 L288.48 167.86 L289.59 167.32 L290.70 166.76 L291.81 166.20 L292.91 165.63 L294.02 165.05 L295.13 164.46 L296.24 163.86 L297.35 163.25 L298.46 162.63 L299.57 161.99 L300.68 161.35 L301.78 160.70 L302.89 160.03 L304.00 159.35 L305.11 158.66 L306.22 157.96 L307.33 157.24 L308.44 156.51 L309.54 155.76 L310.65 155.00 L311.76 154.23 L312.87 153.44 L313.98 152.63 L315.09 151.81 L316.20 150.96 L317.30 150.09 L318.41 149.19 L319.52 148.26 L320.63 147.29 L321.74 146.27 L322.85 145.21 L323.96 144.10 L325.06 142.94 L326.17 141.72 L327.28 140.44 L328.39 139.09 L329.50 137.67 L330.61 136.18 L331.72 134.62 L332.83 133.01 L333.93 131.33 L335.04 129.61 L336.15 127.84 L337.26 126.03 L338.37 124.19 L339.48 122.32 L340.59 120.43 L341.69 118.52 L342.80 116.60 L343.91 114.67 L345.02 112.75 L346.13 110.83 L347.24 108.92 L348.35 107.03 L349.45 105.18 L350.56 103.35 L351.67 101.56 L352.78 99.82 L353.89 98.14 L355.00 96.51 L356.11 94.93 L357.21 93.40 L358.32 91.91 L359.43 90.45 L360.54 89.03 L361.65 87.64 L362.76 86.28 L363.87 84.95 L364.97 83.64 L366.08 82.37 L367.19 81.12 L368.30 79.90 L369.41 78.69 L370.52 77.52 L371.63 76.36 L372.74 75.22 L373.84 74.11 L374.95 73.01 L376.06 71.92 L377.17 70.86 L378.28 69.80 L379.39 68.77 L380.50 67.74 L381.60 66.72 L382.71 65.72 L383.82 64.73 L384.93 63.75 L386.04 62.78 L387.15 61.83 L388.26 60.89 L389.36 59.95 L390.47 59.04 L391.58 58.13 L392.69 57.24 L393.80 56.36 L394.91 55.49 L396.02 54.64 L397.12 53.80 L398.23 52.97 L399.34 52.16 L400.45 51.35 L401.56 50.57 L402.67 49.79 L403.78 49.03 L404.89 48.29 L405.99 47.55 L407.10 46.84 L408.21 46.13 L409.32 45.44 L410.43 44.77 L411.54 44.10 L412.65 43.46 L413.75 42.82 L414.86 42.21 L415.97 41.60 L417.08 41.02 L418.19 40.44 L419.30 39.88 L420.41 39.34 L421.51 38.81 L422.62 38.30 L423.73 37.81 L424.84 37.33 L425.95 36.86 L427.06 36.41 L428.17 35.98 L429.27 35.56 L430.38 35.16 L431.49 34.77 L432.60 34.40 L433.71 34.05 L434.82 33.72 L435.93 33.40 L437.04 33.09 L438.14 32.81 L439.25 32.54 L440.36 32.29 L441.47 32.05 L442.58 31.83 L443.69 31.63 L444.80 31.44 L445.90 31.27 L447.01 31.11 L448.12 30.97 L449.23 30.85 L450.34 30.73 L451.45 30.63 L452.56 30.55 L453.66 30.48 L454.77 30.42 L455.88 30.37 L456.99 30.34 L458.10 30.32 L459.21 30.31 L460.32 30.32 L461.42 30.36 L462.53 30.42 L463.64 30.50 L464.75 30.62 L465.86 30.78 L466.97 30.97 L468.08 31.21 L469.18 31.49 L470.29 31.83 L471.40 32.21 L472.51 32.65 L473.62 33.16 L474.73 33.72 L475.84 34.36 L476.95 35.06 L478.05 35.85 L479.16 36.72 L480.27 37.70 L481.38 38.77 L482.49 39.96 L483.60 41.28 L484.71 42.73 L485.81 44.31 L486.92 46.05 L488.03 47.94 L489.14 49.99 L490.25 52.22 L491.36 54.63 L492.47 57.24 L493.57 60.04 L494.68 63.05 L495.79 66.24 L496.90 69.55 L498.01 72.96 L499.12 76.39 L500.23 79.81 L501.33 83.17 L502.44 86.41 L503.55 89.54 L504.66 92.54 L505.77 95.41 L506.88 98.16 L507.99 100.79 L509.10 103.28 L510.20 105.65 L511.31 107.89 L512.42 109.99 L513.53 111.98 L514.64 113.85 L515.75 115.61 L516.86 117.28 L517.96 118.86 L519.07 120.36 L520.18 121.80 L521.29 123.17 L522.40 124.50 L523.51 125.79 L524.62 127.04 L525.72 128.28 L526.83 129.50 L527.94 130.71 L529.05 131.94 L530.16 133.18 L531.27 134.44 L532.38 135.73 L533.48 137.07 L534.59 138.46 L535.70 139.92 L536.81 141.44 L537.92 143.04 L539.03 144.73 L540.14 146.50 L541.25 148.34 L542.35 150.25 L543.46 152.23 L544.57 154.27 L545.68 156.37 L546.79 158.51 L547.90 160.70 L549.01 162.93 L550.11 165.19 L551.22 167.48 L552.33 169.79 L553.44 172.12 L554.55 174.46 L555.66 176.82 L556.77 179.17 L557.87 181.52 L558.98 183.86 L560.09 186.19 L561.20 188.50 L562.31 190.79 L563.42 193.05 L564.53 195.27 L565.63 197.45 L566.74 199.59 L567.85 201.68 L568.96 203.71 L570.07 205.69 L571.18 207.60 L572.29 209.43 L573.39 211.20 L574.50 212.90 L575.61 214.53 L576.72 216.11 L577.83 217.63 L578.94 219.09 L580.05 220.51 L581.16 221.89 L582.26 223.22 L583.37 224.51 L584.48 225.77 L585.59 226.99 L586.70 228.17 L587.81 229.31 L588.92 230.40 L590.02 231.45 L591.13 232.44 L592.24 233.37 L593.35 234.24 L594.46 235.05 L595.57 235.79 L596.68 236.48 L597.78 237.13 L598.89 237.77 L600.00 238.41 L601.11 239.08 L602.22 239.76 L603.33 240.44 L604.44 241.11 L605.54 241.75 L606.65 242.35 L607.76 242.89 L608.87 243.37 L609.98 243.76 L611.09 244.06 L612.20 244.26 L613.31 244.33 L614.41 244.26 L615.52 244.05 L616.63 243.67 L617.74 243.12 L618.85 242.37 L619.96 241.43 L621.07 240.27 L622.17 238.88 L623.28 237.24 L624.39 235.35 L625.50 233.19" stroke="#30e030" stroke-width="1.3" stroke-linejoin="round" fill="none"/>
<rect x="462.3" y="30.5" width="1.9" height="333" fill="#f0e428"/>
<path d="M128 97H139 M133.5 92V103" stroke="#909090" stroke-width="1" fill="none"/>
<rect x="687" y="24" width="119" height="343.5" fill="#fff"/>
<rect x="687" y="22.7" width="118" height="1.9" fill="#5c5c5c"/>
<rect x="687" y="23" width="1" height="344.5" fill="#5c5c5c"/>
<rect x="688" y="34.4" width="117" height="0.8" fill="#707070"/>
<rect x="805.6" y="24" width="0.8" height="343.5" fill="#a8b0c0"/>
<g font-family='"Liberation Sans", Arial, sans-serif' >
<rect x="736.5" y="25" width="28.7" height="9.3" fill="#ffff00"/>
<rect x="775.2" y="25" width="29.4" height="9.3" fill="#ffff00"/>
<text x="764.8" y="32.8" font-size="9" font-weight="normal" fill="#000" text-anchor="end" textLength="27" lengthAdjust="spacingAndGlyphs" >CAP2</text>
<text x="802.8" y="32.8" font-size="9" font-weight="normal" fill="#000" text-anchor="end" textLength="27.3" lengthAdjust="spacingAndGlyphs" >SAP5</text>
<text x="689.5" y="43.4" font-size="9" font-weight="normal" fill="#000" text-anchor="start" textLength="23.5" lengthAdjust="spacingAndGlyphs" >Time</text>
<rect x="742.1" y="35.1" width="23.1" height="9.8" fill="#ffffff"/>
<text x="764.8" y="43.4" font-size="9" font-weight="normal" fill="#000" text-anchor="end" textLength="21.9" lengthAdjust="spacingAndGlyphs" >4.50</text>
<rect x="780.1" y="35.1" width="23.1" height="9.8" fill="#ffffff"/>
<text x="802.8" y="43.4" font-size="9" font-weight="normal" fill="#000" text-anchor="end" textLength="21.9" lengthAdjust="spacingAndGlyphs" >4.42</text>
<text x="689.5" y="54.1" font-size="9" font-weight="normal" fill="#000" text-anchor="start" textLength="38.2" lengthAdjust="spacingAndGlyphs" >Hubrpm</text>
<rect x="729.6" y="45.8" width="35.6" height="9.8" fill="#ffffff"/>
<text x="764.8" y="54.1" font-size="9" font-weight="normal" fill="#000" text-anchor="end" textLength="34.4" lengthAdjust="spacingAndGlyphs" >967.33</text>
<rect x="767.6" y="45.8" width="35.6" height="9.8" fill="#ffffff"/>
<text x="802.8" y="54.1" font-size="9" font-weight="normal" fill="#000" text-anchor="end" textLength="34.4" lengthAdjust="spacingAndGlyphs" >967.33</text>
<text x="689.5" y="64.8" font-size="9" font-weight="normal" fill="#000" text-anchor="start" textLength="43.5" lengthAdjust="spacingAndGlyphs" >EngRPM</text>
<rect x="739.0" y="56.5" width="26.2" height="9.8" fill="#ffffff"/>
<text x="764.8" y="64.8" font-size="9" font-weight="normal" fill="#000" text-anchor="end" textLength="25.0" lengthAdjust="spacingAndGlyphs" >5330</text>
<rect x="777.0" y="56.5" width="26.2" height="9.8" fill="#ffffff"/>
<text x="802.8" y="64.8" font-size="9" font-weight="normal" fill="#000" text-anchor="end" textLength="25.0" lengthAdjust="spacingAndGlyphs" >5330</text>
<text x="689.5" y="75.5" font-size="9" font-weight="normal" fill="#000" text-anchor="start" textLength="44.2" lengthAdjust="spacingAndGlyphs" >AxleTorq</text>
<rect x="729.6" y="67.2" width="35.6" height="9.8" fill="#ffffff"/>
<text x="764.8" y="75.5" font-size="9" font-weight="normal" fill="#000" text-anchor="end" textLength="34.4" lengthAdjust="spacingAndGlyphs" >1384.3</text>
<rect x="767.6" y="67.2" width="35.6" height="9.8" fill="#ffffff"/>
<text x="802.8" y="75.5" font-size="9" font-weight="normal" fill="#000" text-anchor="end" textLength="34.4" lengthAdjust="spacingAndGlyphs" >1288.8</text>
<text x="689.5" y="86.2" font-size="9" font-weight="normal" fill="#000" text-anchor="start" textLength="44.2" lengthAdjust="spacingAndGlyphs" >AxleTorq</text>
<rect x="729.6" y="77.9" width="35.6" height="9.8" fill="#ffffff"/>
<text x="764.8" y="86.2" font-size="9" font-weight="normal" fill="#000" text-anchor="end" textLength="34.4" lengthAdjust="spacingAndGlyphs" >1384.3</text>
<rect x="767.6" y="77.9" width="35.6" height="9.8" fill="#ffffff"/>
<text x="802.8" y="86.2" font-size="9" font-weight="normal" fill="#000" text-anchor="end" textLength="34.4" lengthAdjust="spacingAndGlyphs" >1288.8</text>
<text x="689.5" y="96.8" font-size="9" font-weight="normal" fill="#000" text-anchor="start" textLength="50.7" lengthAdjust="spacingAndGlyphs" >AxleTorqS</text>
<rect x="748.4" y="88.5" width="16.8" height="9.8" fill="#ffffff"/>
<text x="764.8" y="96.8" font-size="9" font-weight="normal" fill="#000" text-anchor="end" textLength="15.6" lengthAdjust="spacingAndGlyphs" >0.0</text>
<rect x="786.4" y="88.5" width="16.8" height="9.8" fill="#ffffff"/>
<text x="802.8" y="96.8" font-size="9" font-weight="normal" fill="#000" text-anchor="end" textLength="15.6" lengthAdjust="spacingAndGlyphs" >0.0</text>
<rect x="688.5" y="99.2" width="37.0" height="9.8" fill="#20e8f0"/>
<text x="689.5" y="107.5" font-size="9" font-weight="normal" fill="#000" text-anchor="start" textLength="34.5" lengthAdjust="spacingAndGlyphs" >Torque</text>
<rect x="733.7" y="99.2" width="31.5" height="9.8" fill="#20e8f0"/>
<text x="764.8" y="107.5" font-size="9" font-weight="normal" fill="#000" text-anchor="end" textLength="28.1" lengthAdjust="spacingAndGlyphs" >251.2</text>
<rect x="769.7" y="99.2" width="33.5" height="9.8" fill="#20e8f0"/>
<text x="802.8" y="107.5" font-size="9" font-weight="normal" fill="#000" text-anchor="end" textLength="28.1" lengthAdjust="spacingAndGlyphs" >233.9</text>
<text x="689.5" y="118.2" font-size="9" font-weight="normal" fill="#000" text-anchor="start" textLength="41.5" lengthAdjust="spacingAndGlyphs" >AxlePow</text>
<rect x="735.9" y="109.9" width="29.3" height="9.8" fill="#ffffff"/>
<text x="764.8" y="118.2" font-size="9" font-weight="normal" fill="#000" text-anchor="end" textLength="28.1" lengthAdjust="spacingAndGlyphs" >255.0</text>
<rect x="773.9" y="109.9" width="29.3" height="9.8" fill="#ffffff"/>
<text x="802.8" y="118.2" font-size="9" font-weight="normal" fill="#000" text-anchor="end" textLength="28.1" lengthAdjust="spacingAndGlyphs" >237.4</text>
<rect x="688.5" y="120.6" width="32.7" height="9.8" fill="#10e010"/>
<text x="689.5" y="128.9" font-size="9" font-weight="normal" fill="#000" text-anchor="start" textLength="30.2" lengthAdjust="spacingAndGlyphs" >Power</text>
<rect x="733.7" y="120.6" width="31.5" height="9.8" fill="#10e010"/>
<text x="764.8" y="128.9" font-size="9" font-weight="normal" fill="#000" text-anchor="end" textLength="28.1" lengthAdjust="spacingAndGlyphs" >255.0</text>
<rect x="769.7" y="120.6" width="33.5" height="9.8" fill="#10e010"/>
<text x="802.8" y="128.9" font-size="9" font-weight="normal" fill="#000" text-anchor="end" textLength="28.1" lengthAdjust="spacingAndGlyphs" >237.4</text>
<text x="689.5" y="139.6" font-size="9" font-weight="normal" fill="#000" text-anchor="start" textLength="32.7" lengthAdjust="spacingAndGlyphs" >PCRati</text>
<rect x="723.3" y="131.3" width="41.9" height="9.8" fill="#ffffff"/>
<text x="764.8" y="139.6" font-size="9" font-weight="normal" fill="#000" text-anchor="end" textLength="40.7" lengthAdjust="spacingAndGlyphs" >1.00000</text>
<rect x="761.3" y="131.3" width="41.9" height="9.8" fill="#ffffff"/>
<text x="802.8" y="139.6" font-size="9" font-weight="normal" fill="#000" text-anchor="end" textLength="40.7" lengthAdjust="spacingAndGlyphs" >1.00000</text>
<text x="689.5" y="150.3" font-size="9" font-weight="normal" fill="#000" text-anchor="start" textLength="22.7" lengthAdjust="spacingAndGlyphs" >MAP</text>
<rect x="735.9" y="142.0" width="29.3" height="9.8" fill="#ffffff"/>
<text x="764.8" y="150.3" font-size="9" font-weight="normal" fill="#000" text-anchor="end" textLength="28.1" lengthAdjust="spacingAndGlyphs" >18.81</text>
<rect x="773.9" y="142.0" width="29.3" height="9.8" fill="#ffffff"/>
<text x="802.8" y="150.3" font-size="9" font-weight="normal" fill="#000" text-anchor="end" textLength="28.1" lengthAdjust="spacingAndGlyphs" >18.16</text>
<text x="689.5" y="161.0" font-size="9" font-weight="normal" fill="#000" text-anchor="start" textLength="27.2" lengthAdjust="spacingAndGlyphs" >Temp</text>
<rect x="735.9" y="152.7" width="29.3" height="9.8" fill="#ffffff"/>
<text x="764.8" y="161.0" font-size="9" font-weight="normal" fill="#000" text-anchor="end" textLength="28.1" lengthAdjust="spacingAndGlyphs" >212.3</text>
<rect x="773.9" y="152.7" width="29.3" height="9.8" fill="#ffffff"/>
<text x="802.8" y="161.0" font-size="9" font-weight="normal" fill="#000" text-anchor="end" textLength="28.1" lengthAdjust="spacingAndGlyphs" >212.3</text>
<text x="689.5" y="171.7" font-size="9" font-weight="normal" fill="#000" text-anchor="start" textLength="37.7" lengthAdjust="spacingAndGlyphs" >AirDens</text>
<rect x="729.6" y="163.4" width="35.6" height="9.8" fill="#ffffff"/>
<text x="764.8" y="171.7" font-size="9" font-weight="normal" fill="#000" text-anchor="end" textLength="34.4" lengthAdjust="spacingAndGlyphs" >0.4418</text>
<rect x="767.6" y="163.4" width="35.6" height="9.8" fill="#ffffff"/>
<text x="802.8" y="171.7" font-size="9" font-weight="normal" fill="#000" text-anchor="end" textLength="34.4" lengthAdjust="spacingAndGlyphs" >0.4057</text>
<text x="689.5" y="182.4" font-size="9" font-weight="normal" fill="#000" text-anchor="start" textLength="22.7" lengthAdjust="spacingAndGlyphs" >Baro</text>
<rect x="742.1" y="174.1" width="23.1" height="9.8" fill="#ffffff"/>
<text x="764.8" y="182.4" font-size="9" font-weight="normal" fill="#000" text-anchor="end" textLength="21.9" lengthAdjust="spacingAndGlyphs" >29.7</text>
<rect x="780.1" y="174.1" width="23.1" height="9.8" fill="#ffffff"/>
<text x="802.8" y="182.4" font-size="9" font-weight="normal" fill="#000" text-anchor="end" textLength="21.9" lengthAdjust="spacingAndGlyphs" >29.7</text>
<text x="689.5" y="193.1" font-size="9" font-weight="normal" fill="#000" text-anchor="start" textLength="38.2" lengthAdjust="spacingAndGlyphs" >RelHum</text>
<rect x="742.1" y="184.8" width="23.1" height="9.8" fill="#ffffff"/>
<text x="764.8" y="193.1" font-size="9" font-weight="normal" fill="#000" text-anchor="end" textLength="21.9" lengthAdjust="spacingAndGlyphs" >51.7</text>
<rect x="780.1" y="184.8" width="23.1" height="9.8" fill="#ffffff"/>
<text x="802.8" y="193.1" font-size="9" font-weight="normal" fill="#000" text-anchor="end" textLength="21.9" lengthAdjust="spacingAndGlyphs" >55.5</text>
<text x="689.5" y="203.8" font-size="9" font-weight="normal" fill="#000" text-anchor="start" textLength="31.0" lengthAdjust="spacingAndGlyphs" >Speed</text>
<rect x="742.1" y="195.4" width="23.1" height="9.8" fill="#ffffff"/>
<text x="764.8" y="203.8" font-size="9" font-weight="normal" fill="#000" text-anchor="end" textLength="21.9" lengthAdjust="spacingAndGlyphs" >78.3</text>
<rect x="780.1" y="195.4" width="23.1" height="9.8" fill="#ffffff"/>
<text x="802.8" y="203.8" font-size="9" font-weight="normal" fill="#000" text-anchor="end" textLength="21.9" lengthAdjust="spacingAndGlyphs" >78.3</text>
<text x="689.5" y="214.4" font-size="9" font-weight="normal" fill="#000" text-anchor="start" textLength="35.2" lengthAdjust="spacingAndGlyphs" >T.Effort</text>
<rect x="729.6" y="206.1" width="35.6" height="9.8" fill="#ffffff"/>
<text x="764.8" y="214.4" font-size="9" font-weight="normal" fill="#000" text-anchor="end" textLength="34.4" lengthAdjust="spacingAndGlyphs" >1221.4</text>
<rect x="767.6" y="206.1" width="35.6" height="9.8" fill="#ffffff"/>
<text x="802.8" y="214.4" font-size="9" font-weight="normal" fill="#000" text-anchor="end" textLength="34.4" lengthAdjust="spacingAndGlyphs" >1137.2</text>
<text x="689.5" y="225.1" font-size="9" font-weight="normal" fill="#000" text-anchor="start" textLength="25.7" lengthAdjust="spacingAndGlyphs" >Accel</text>
<rect x="729.6" y="216.8" width="35.6" height="9.8" fill="#ffffff"/>
<text x="764.8" y="225.1" font-size="9" font-weight="normal" fill="#000" text-anchor="end" textLength="34.4" lengthAdjust="spacingAndGlyphs" >0.3957</text>
<rect x="767.6" y="216.8" width="35.6" height="9.8" fill="#ffffff"/>
<text x="802.8" y="225.1" font-size="9" font-weight="normal" fill="#000" text-anchor="end" textLength="34.4" lengthAdjust="spacingAndGlyphs" >0.3684</text>
<text x="689.5" y="235.8" font-size="9" font-weight="normal" fill="#000" text-anchor="start" textLength="41.5" lengthAdjust="spacingAndGlyphs" >Distance</text>
<rect x="735.9" y="227.5" width="29.3" height="9.8" fill="#ffffff"/>
<text x="764.8" y="235.8" font-size="9" font-weight="normal" fill="#000" text-anchor="end" textLength="28.1" lengthAdjust="spacingAndGlyphs" >372.4</text>
<rect x="773.9" y="227.5" width="29.3" height="9.8" fill="#ffffff"/>
<text x="802.8" y="235.8" font-size="9" font-weight="normal" fill="#000" text-anchor="end" textLength="28.1" lengthAdjust="spacingAndGlyphs" >372.4</text>
</g>
<g font-family='"Liberation Sans", Arial, sans-serif' >
<text x="24.5" y="398" font-size="12.3" font-weight="bold" fill="#000" text-anchor="start" textLength="97" lengthAdjust="spacingAndGlyphs" >Plot 1 (Solid)</text>
<text x="173.5" y="398" font-size="12.3" font-weight="bold" fill="#000" text-anchor="start" textLength="47.5" lengthAdjust="spacingAndGlyphs" >X Axis</text>
<text x="243" y="398" font-size="12.3" font-weight="bold" fill="#000" text-anchor="start" textLength="93" lengthAdjust="spacingAndGlyphs" >Y Axis (Left)</text>
<text x="368" y="398" font-size="12.3" font-weight="bold" fill="#000" text-anchor="start" textLength="104" lengthAdjust="spacingAndGlyphs" >Y Axis (Right)</text>
<text x="594" y="398" font-size="12.3" font-weight="bold" fill="#000" text-anchor="start" textLength="98" lengthAdjust="spacingAndGlyphs" >Plot 2 (Dash)</text>
<text x="486.5" y="393.6" font-size="8.4" font-weight="bold" fill="#000" text-anchor="start" textLength="31.5" lengthAdjust="spacingAndGlyphs" >Show</text>
<text x="486.5" y="404.6" font-size="8.4" font-weight="bold" fill="#000" text-anchor="start" textLength="25.5" lengthAdjust="spacingAndGlyphs" >Ave.</text>
<text x="522" y="393.6" font-size="8.4" font-weight="bold" fill="#000" text-anchor="start" textLength="31.5" lengthAdjust="spacingAndGlyphs" >Show</text>
<text x="522" y="404.6" font-size="8.4" font-weight="bold" fill="#000" text-anchor="start" textLength="26" lengthAdjust="spacingAndGlyphs" >Data</text>
<text x="552.5" y="393.6" font-size="8.4" font-weight="bold" fill="#000" text-anchor="start" textLength="27.5" lengthAdjust="spacingAndGlyphs" >Lock</text>
<text x="552.5" y="404.6" font-size="8.4" font-weight="bold" fill="#000" text-anchor="start" textLength="39" lengthAdjust="spacingAndGlyphs" >Cursor</text>
<rect x="24" y="405.7" width="10.5" height="17.5" fill="#b8b8b8"/>
<rect x="24" y="405.7" width="10.5" height="8.3" fill="#d0d0d0" stroke="#a0a0a0" stroke-width="0.5"/>
<rect x="24" y="414.9" width="10.5" height="8.3" fill="#d0d0d0" stroke="#a0a0a0" stroke-width="0.5"/>
<path d="M25.5 412.3L29.2 407.7L33 412.3Z M25.5 416.7L29.2 421.3L33 416.7Z" fill="#000"/>
<rect x="35" y="405.7" width="133" height="17.5" fill="#ffff20"/>
<path d="M35 423.2V406.2H168" stroke="#707070" stroke-width="1" fill="none"/>
<rect x="173" y="405.7" width="10.5" height="17.5" fill="#b8b8b8"/>
<rect x="173" y="405.7" width="10.5" height="8.3" fill="#d0d0d0" stroke="#a0a0a0" stroke-width="0.5"/>
<rect x="173" y="414.9" width="10.5" height="8.3" fill="#d0d0d0" stroke="#a0a0a0" stroke-width="0.5"/>
<path d="M174.5 412.3L178.2 407.7L182 412.3Z M174.5 416.7L178.2 421.3L182 416.7Z" fill="#000"/>
<rect x="184" y="405.7" width="52.5" height="17.5" fill="#ffff20"/>
<path d="M184 423.2V406.2H236.5" stroke="#707070" stroke-width="1" fill="none"/>
<rect x="242.5" y="405.7" width="10.5" height="17.5" fill="#b8b8b8"/>
<rect x="242.5" y="405.7" width="10.5" height="8.3" fill="#d0d0d0" stroke="#a0a0a0" stroke-width="0.5"/>
<rect x="242.5" y="414.9" width="10.5" height="8.3" fill="#d0d0d0" stroke="#a0a0a0" stroke-width="0.5"/>
<path d="M244.0 412.3L247.7 407.7L251.5 412.3Z M244.0 416.7L247.7 421.3L251.5 416.7Z" fill="#000"/>
<rect x="253.5" y="405.7" width="107" height="17.5" fill="#20f8f8"/>
<path d="M253.5 423.2V406.2H360.5" stroke="#707070" stroke-width="1" fill="none"/>
<rect x="367" y="405.7" width="10.5" height="17.5" fill="#b8b8b8"/>
<rect x="367" y="405.7" width="10.5" height="8.3" fill="#d0d0d0" stroke="#a0a0a0" stroke-width="0.5"/>
<rect x="367" y="414.9" width="10.5" height="8.3" fill="#d0d0d0" stroke="#a0a0a0" stroke-width="0.5"/>
<path d="M368.5 412.3L372.2 407.7L376 412.3Z M368.5 416.7L372.2 421.3L376 416.7Z" fill="#000"/>
<rect x="377.8" y="405.7" width="107" height="17.5" fill="#08f808"/>
<path d="M377.8 423.2V406.2H484.8" stroke="#707070" stroke-width="1" fill="none"/>
<rect x="594" y="405.2" width="10.5" height="17.5" fill="#b8b8b8"/>
<rect x="594" y="405.2" width="10.5" height="8.3" fill="#d0d0d0" stroke="#a0a0a0" stroke-width="0.5"/>
<rect x="594" y="414.4" width="10.5" height="8.3" fill="#d0d0d0" stroke="#a0a0a0" stroke-width="0.5"/>
<path d="M595.5 411.8L599.2 407.2L603 411.8Z M595.5 416.2L599.2 420.8L603 416.2Z" fill="#000"/>
<rect x="604.8" y="405.2" width="133" height="17.8" fill="#ffff20"/>
<path d="M604.8 423.0V405.7H737.8" stroke="#707070" stroke-width="1" fill="none"/>
<text x="37" y="419.2" font-size="13.3" font-weight="normal" fill="#000" text-anchor="start" textLength="121.5" lengthAdjust="spacingAndGlyphs" >Comparison AP 2</text>
<clipPath id="ec"><rect x="184" y="405" width="52" height="19"/></clipPath>
<text x="185.7" y="419.2" font-size="13.3" font-weight="normal" fill="#000" text-anchor="start" textLength="59" lengthAdjust="spacingAndGlyphs" clip-path="url(#ec)">Eng rpm</text>
<text x="255" y="419.2" font-size="13.3" font-weight="normal" fill="#000" text-anchor="start" textLength="48" lengthAdjust="spacingAndGlyphs" >Torque</text>
<text x="379" y="419.2" font-size="13.3" font-weight="normal" fill="#000" text-anchor="start" textLength="44" lengthAdjust="spacingAndGlyphs" >Power</text>
<text x="606.5" y="419.2" font-size="13.3" font-weight="normal" fill="#000" text-anchor="start" textLength="87.5" lengthAdjust="spacingAndGlyphs" >Source AP 5</text>
<rect x="494" y="411.7" width="16.5" height="14" fill="#fff"/>
<path d="M494 425.7V412.2H510.5" stroke="#707070" stroke-width="1" fill="none"/>
<path d="M494.5 425.2H510.0V412.7" stroke="#f4f4f4" stroke-width="1" fill="none"/>
<rect x="531" y="411.7" width="16.5" height="14" fill="#fff"/>
<path d="M531 425.7V412.2H547.5" stroke="#707070" stroke-width="1" fill="none"/>
<path d="M531.5 425.2H547.0V412.7" stroke="#f4f4f4" stroke-width="1" fill="none"/>
<path d="M533.2 417.7L536.8 422.3L544.6 414.3" stroke="#000" stroke-width="2.8" fill="none"/>
<rect x="563.5" y="411.7" width="16.5" height="14" fill="#fff"/>
<path d="M563.5 425.7V412.2H580.0" stroke="#707070" stroke-width="1" fill="none"/>
<path d="M564.0 425.2H579.5V412.7" stroke="#f4f4f4" stroke-width="1" fill="none"/>
<path d="M565.7 417.7L569.3 422.3L577.1 414.3" stroke="#000" stroke-width="2.8" fill="none"/>
<text x="24.5" y="442.6" font-size="10.8" font-weight="bold" fill="#000" text-anchor="start" textLength="47.5" lengthAdjust="spacingAndGlyphs" >Folder:</text>
<rect x="80" y="431" width="125.5" height="14.5" fill="#ffffd0"/>
<path d="M80 445.5V431.5H205.5" stroke="#707070" stroke-width="1" fill="none"/>
<path d="M80.5 445.0H205.0V432" stroke="#e8e8e8" stroke-width="1" fill="none"/>
<text x="82" y="442" font-size="10" font-weight="normal" fill="#000" text-anchor="start" textLength="114" lengthAdjust="spacingAndGlyphs" >hps_15mustangeco</text>
<text x="24.5" y="463.6" font-size="10.8" font-weight="bold" fill="#000" text-anchor="start" textLength="49.5" lengthAdjust="spacingAndGlyphs" >Run ID:</text>
<rect x="80" y="452" width="150.5" height="14.5" fill="#ffffd0"/>
<path d="M80 466.5V452.5H230.5" stroke="#707070" stroke-width="1" fill="none"/>
<path d="M80.5 466.0H230.0V453" stroke="#e8e8e8" stroke-width="1" fill="none"/>
<text x="82" y="463" font-size="10" font-weight="normal" fill="#000" text-anchor="start" textLength="81" lengthAdjust="spacingAndGlyphs" >5 hps ic pipes</text>
<text x="24.5" y="484.3" font-size="10.8" font-weight="bold" fill="#000" text-anchor="start" textLength="35" lengthAdjust="spacingAndGlyphs" >Date:</text>
<rect x="80" y="472.7" width="150.5" height="14.5" fill="#ffffd0"/>
<path d="M80 487.2V473.2H230.5" stroke="#707070" stroke-width="1" fill="none"/>
<path d="M80.5 486.7H230.0V473.7" stroke="#e8e8e8" stroke-width="1" fill="none"/>
<text x="82" y="483.7" font-size="10" font-weight="normal" fill="#000" text-anchor="start" textLength="132.5" lengthAdjust="spacingAndGlyphs" >06-Jan-2017  15:37:50</text>
<text x="594" y="442.6" font-size="10.8" font-weight="bold" fill="#000" text-anchor="start" textLength="47.5" lengthAdjust="spacingAndGlyphs" >Folder:</text>
<rect x="648.5" y="431" width="125" height="14.5" fill="#ffffd0"/>
<path d="M648.5 445.5V431.5H773.5" stroke="#707070" stroke-width="1" fill="none"/>
<path d="M649.0 445.0H773.0V432" stroke="#e8e8e8" stroke-width="1" fill="none"/>
<text x="650.5" y="442" font-size="10" font-weight="normal" fill="#000" text-anchor="start" textLength="114" lengthAdjust="spacingAndGlyphs" >hps_15mustangeco</text>
<text x="594" y="463.6" font-size="10.8" font-weight="bold" fill="#000" text-anchor="start" textLength="49.5" lengthAdjust="spacingAndGlyphs" >Run ID:</text>
<rect x="648.5" y="452" width="149.5" height="14.5" fill="#ffffd0"/>
<path d="M648.5 466.5V452.5H798.0" stroke="#707070" stroke-width="1" fill="none"/>
<path d="M649.0 466.0H797.5V453" stroke="#e8e8e8" stroke-width="1" fill="none"/>
<text x="650.5" y="463" font-size="10" font-weight="normal" fill="#000" text-anchor="start" textLength="56" lengthAdjust="spacingAndGlyphs" >3 STOCK</text>
<text x="594" y="484.3" font-size="10.8" font-weight="bold" fill="#000" text-anchor="start" textLength="35" lengthAdjust="spacingAndGlyphs" >Date:</text>
<rect x="648.5" y="472.7" width="149.5" height="14.5" fill="#ffffd0"/>
<path d="M648.5 487.2V473.2H798.0" stroke="#707070" stroke-width="1" fill="none"/>
<path d="M649.0 486.7H797.5V473.7" stroke="#e8e8e8" stroke-width="1" fill="none"/>
<text x="650.5" y="483.7" font-size="10" font-weight="normal" fill="#000" text-anchor="start" textLength="132.5" lengthAdjust="spacingAndGlyphs" >06-Jan-2017  14:13:53</text>
</g>
<rect x="236.5" y="428.5" width="352.5" height="62.5" fill="#fff"/>
<path d="M236.5 491V428.5H589" stroke="#a0a0a0" stroke-width="1" fill="none"/>
<g font-family='"Liberation Sans", Arial, sans-serif' font-weight="bold" font-style="italic">
<clipPath id="sc"><path clip-rule="evenodd" d="M350 425H460V500H350Z M350 461.5H397L392 474.6H350Z M408.3 447H450V469H430.5L427.5 465.5Z"/></clipPath>
<path d="M256.8 474.3H396.4L379.5 455.5Q377.5 449 386 446.3H407.6L428 469Q431.5 476 421 480.8H250.6Z" fill="#000" stroke="#000" stroke-width="1.1" stroke-linejoin="round"/>
<g clip-path="url(#sc)">
<text transform="translate(367.5,478.5) skewX(-22) scale(1.7,1)" font-size="54" font-style="normal" fill="#000" stroke="#000" stroke-width="3.3" stroke-linejoin="round" aria-hidden="true">S</text>
</g>
<path d="M256.8 474.3H396.4L379.5 455.5Q377.5 449 386 446.3H407.6L428 469Q431.5 476 421 480.8H250.6Z" fill="#ee1c24"/>
<g clip-path="url(#sc)">
<text transform="translate(367.5,478.5) skewX(-22) scale(1.7,1)" font-size="54" font-style="normal" fill="#ee1c24" stroke="#ee1c24" stroke-width="2.4" stroke-linejoin="round">S</text>
</g>
<path d="M436.2 447H408.3L427.5 465.5" fill="none" stroke="#000" stroke-width="0.9"/>
<text transform="translate(253,469.2) skewX(-25) scale(2.06,1)" font-size="37.5" font-style="normal" fill="#000" stroke="#000" stroke-width="3.4" textLength="56.5" lengthAdjust="spacingAndGlyphs">HP</text>
<text transform="translate(63.9,0) skewX(-8)" x="446.3" y="457.8" font-size="20.5" fill="#000" stroke="#000" stroke-width="2.4" stroke-linejoin="round" textLength="133" lengthAdjust="spacingAndGlyphs" aria-hidden="true">PERFORMANCE</text>
<text transform="translate(63.9,0) skewX(-8)" x="445" y="456.7" font-size="20.5" fill="#fff" stroke="#000" stroke-width="2.2" paint-order="stroke" stroke-linejoin="round" textLength="133" lengthAdjust="spacingAndGlyphs">PERFORMANCE</text>
<text transform="translate(67.2,0) skewX(-8)" x="446.3" y="480.8" font-size="20.5" fill="#000" stroke="#000" stroke-width="2.4" stroke-linejoin="round" textLength="96" lengthAdjust="spacingAndGlyphs" aria-hidden="true">PRODUCTS</text>
<text transform="translate(67.2,0) skewX(-8)" x="445" y="479.7" font-size="20.5" fill="#fff" stroke="#000" stroke-width="2.2" paint-order="stroke" stroke-linejoin="round" textLength="96" lengthAdjust="spacingAndGlyphs">PRODUCTS</text>
</g>
</svg>
</body></html>
